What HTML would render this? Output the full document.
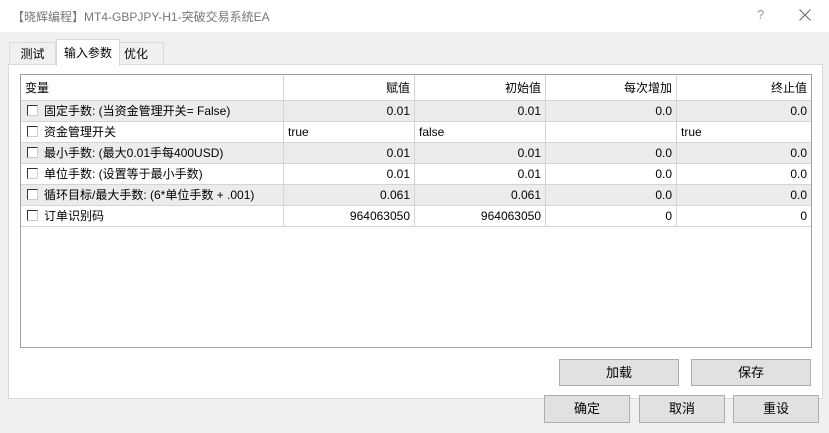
<!DOCTYPE html>
<html><head><meta charset="utf-8"><style>
*{margin:0;padding:0;box-sizing:border-box}
body{width:829px;height:433px;background:#f0f0f0;font-family:"Liberation Sans","Noto Sans CJK SC",sans-serif;font-size:12px;color:#000;position:relative;overflow:hidden}
.abs{position:absolute}
.title{left:0;top:0;width:829px;height:32px;background:#fff}
.title span{position:absolute;left:12px;top:8px;font-size:12px;color:#777}
.tab{position:absolute;border:1px solid #d9d9d9;border-bottom:none;background:#f0f0f0;text-align:center;line-height:22px}
.panel{left:8px;top:64px;width:815px;height:335px;background:#fff;border:1px solid #d9d9d9}
.list{left:20px;top:74px;width:792px;height:274px;border:1px solid #a0a0a0;background:#fff}
.row{position:absolute;left:0;width:790px;height:21px;border-bottom:1px solid #d4d4d4}
.c{position:absolute;top:0;height:100%;border-right:1px solid #d4d4d4;line-height:20px;padding:0 4px;white-space:nowrap}
.r{text-align:right}
.cb{display:inline-block;width:11px;height:11px;border:1px solid #333;border-right-color:#ccc;border-bottom-color:#ccc;vertical-align:-1px;margin:0 6px 0 2px;background:#fff}
.btn{position:absolute;background:#e1e1e1;border:1px solid #adadad;text-align:center;line-height:25px;font-size:13px}
</style></head><body>
<div class="abs title"><span>【晓辉编程】MT4-GBPJPY-H1-突破交易系统EA</span>
<span style="left:757px;top:7px;font-size:13px;color:#999">?</span>
<svg style="position:absolute;left:799px;top:9px" width="12" height="12" viewBox="0 0 12 12"><path d="M0.5 0.5L11.5 11.5M11.5 0.5L0.5 11.5" stroke="#666" stroke-width="1"/></svg></div>
<div class="abs panel"></div>
<div class="tab" style="left:9px;top:42px;width:47px;height:22px">测试</div>
<div class="tab" style="left:119px;top:42px;width:45px;height:22px;text-align:left;padding-left:4px">优化</div>
<div class="tab" style="left:56px;top:39px;width:64px;height:27px;background:#fff;line-height:26px">输入参数</div>
<div class="abs list">
<div class="row" style="top:0;height:26px;background:#fff">
<div class="c" style="left:0;width:263px;line-height:26px">变量</div>
<div class="c r" style="left:263px;width:131px;line-height:26px">赋值</div>
<div class="c r" style="left:394px;width:131px;line-height:26px">初始值</div>
<div class="c r" style="left:525px;width:131px;line-height:26px">每次增加</div>
<div class="c r" style="left:656px;width:134px;line-height:26px;border-right:none">终止值</div></div>
<div class="row" style="top:26px;background:#ececec"><div class="c" style="left:0;width:263px"><span class="cb"></span>固定手数: (当资金管理开关= False)</div><div class="c r" style="left:263px;width:131px">0.01</div><div class="c r" style="left:394px;width:131px">0.01</div><div class="c r" style="left:525px;width:131px">0.0</div><div class="c r" style="left:656px;width:134px;border-right:none">0.0</div></div>
<div class="row" style="top:47px"><div class="c" style="left:0;width:263px"><span class="cb"></span>资金管理开关</div><div class="c" style="left:263px;width:131px">true</div><div class="c" style="left:394px;width:131px">false</div><div class="c" style="left:525px;width:131px"></div><div class="c" style="left:656px;width:134px;border-right:none">true</div></div>
<div class="row" style="top:68px;background:#ececec"><div class="c" style="left:0;width:263px"><span class="cb"></span>最小手数: (最大0.01手每400USD)</div><div class="c r" style="left:263px;width:131px">0.01</div><div class="c r" style="left:394px;width:131px">0.01</div><div class="c r" style="left:525px;width:131px">0.0</div><div class="c r" style="left:656px;width:134px;border-right:none">0.0</div></div>
<div class="row" style="top:89px"><div class="c" style="left:0;width:263px"><span class="cb"></span>单位手数: (设置等于最小手数)</div><div class="c r" style="left:263px;width:131px">0.01</div><div class="c r" style="left:394px;width:131px">0.01</div><div class="c r" style="left:525px;width:131px">0.0</div><div class="c r" style="left:656px;width:134px;border-right:none">0.0</div></div>
<div class="row" style="top:110px;background:#ececec"><div class="c" style="left:0;width:263px"><span class="cb"></span>循环目标/最大手数: (6*单位手数 + .001)</div><div class="c r" style="left:263px;width:131px">0.061</div><div class="c r" style="left:394px;width:131px">0.061</div><div class="c r" style="left:525px;width:131px">0.0</div><div class="c r" style="left:656px;width:134px;border-right:none">0.0</div></div>
<div class="row" style="top:131px"><div class="c" style="left:0;width:263px"><span class="cb"></span>订单识别码</div><div class="c r" style="left:263px;width:131px">964063050</div><div class="c r" style="left:394px;width:131px">964063050</div><div class="c r" style="left:525px;width:131px">0</div><div class="c r" style="left:656px;width:134px;border-right:none">0</div></div>
</div>
<div class="btn" style="left:559px;top:359px;width:120px;height:27px">加载</div>
<div class="btn" style="left:691px;top:359px;width:120px;height:27px">保存</div>
<div class="btn" style="left:544px;top:395px;width:86px;height:28px">确定</div>
<div class="btn" style="left:639px;top:395px;width:86px;height:28px">取消</div>
<div class="btn" style="left:733px;top:395px;width:86px;height:28px">重设</div>
</body></html>
